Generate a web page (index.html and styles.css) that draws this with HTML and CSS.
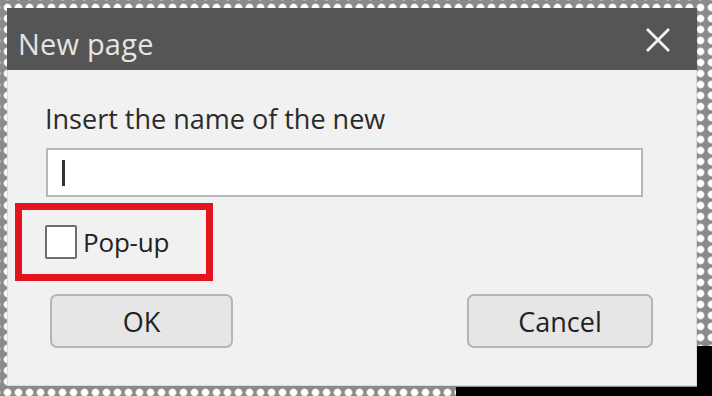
FILE: index.html
```html
<!DOCTYPE html>
<html>
<head>
<meta charset="utf-8">
<link rel="stylesheet" href="styles.css">
</head>
<body>
<div class="stage">
  <div class="dialog">
    <div class="titlebar">
      <span class="title">New page</span>
      <svg class="close" width="28" height="26" viewBox="0 0 28 26"><path d="M3 2 L25 24 M25 2 L3 24" stroke="#f2f2f2" stroke-width="2.8" fill="none"/></svg>
    </div>
    <div class="content">
      <div class="label">Insert the name of the new</div>
      <div class="input"><span class="caret"></span></div>
      <div class="highlight">
        <span class="check"></span>
        <span class="check-label">Pop-up</span>
      </div>
      <div class="buttons">
        <div class="btn btn-ok">OK</div>
        <div class="btn btn-cancel">Cancel</div>
      </div>
    </div>
  </div>
  <div class="shadow-right"></div>
  <div class="shadow-bottom"></div>
</div>
</body>
</html>
```
FILE: styles.css
```css
html, body {
  margin: 0;
  padding: 0;
}
body {
  width: 712px;
  height: 396px;
  overflow: hidden;
  background-color: #ffffff;
  background-image: radial-gradient(circle, #ffffff 0, #ffffff 3px, #8a8a8a 4.5px);
  background-size: 11px 11px;
  background-position: 2px 2px;
  font-family: "Open Sans", "Noto Sans", sans-serif;
}
.stage {
  position: relative;
  width: 712px;
  height: 396px;
  padding: 8px 0 0 7px;
  box-sizing: border-box;
}
.dialog {
  width: 690px;
  height: 378px;
  display: flex;
  flex-direction: column;
  background: #f0f0f0;
  position: relative;
  z-index: 1;
}
.titlebar {
  height: 62px;
  background: #555555;
  display: flex;
  align-items: center;
  justify-content: space-between;
  padding: 0 25px 0 11px;
  box-sizing: border-box;
  flex: none;
}
.title {
  color: #e4e4e4;
  font-size: 29px;
  line-height: 36px;
  letter-spacing: 0.2px;
  margin-top: 10px;
}
.close {
  display: block;
  margin-top: 2px;
}
.content {
  flex: 1;
  display: flex;
  flex-direction: column;
  border: 1px solid #d9d9d9;
  border-top: none;
  background: #f1f1f1;
}
.label {
  margin: 33px 0 0 37px;
  font-size: 27px;
  line-height: 32px;
  color: #2b2b2b;
}
.input {
  margin: 13px 0 0 38px;
  width: 597px;
  height: 49px;
  box-sizing: border-box;
  background: #ffffff;
  border: 2px solid #b7b7b7;
  display: flex;
  align-items: center;
  padding-left: 14px;
}
.caret {
  width: 3px;
  height: 26px;
  background: #333;
}
.highlight {
  margin: 6px 0 0 7px;
  width: 198px;
  height: 78px;
  box-sizing: border-box;
  border: 7px solid #e3141d;
  display: flex;
  align-items: center;
  padding-left: 23px;
  gap: 6px;
}
.check {
  width: 32px;
  height: 34px;
  box-sizing: border-box;
  border: 2px solid #6e6e6e;
  background: #ffffff;
  border-radius: 2px;
}
.check-label {
  font-size: 26px;
  line-height: 32px;
  color: #222;
  letter-spacing: -0.2px;
}
.buttons {
  display: flex;
  justify-content: space-between;
  margin: 13px 43px 0 42px;
}
.btn {
  height: 54px;
  box-sizing: border-box;
  border: 2px solid #b5b5b5;
  border-radius: 7px;
  background: #e6e6e6;
  display: flex;
  align-items: center;
  justify-content: center;
  font-size: 27px;
  color: #222;
}
.btn-ok {
  width: 183px;
}
.btn-cancel {
  width: 186px;
}
.shadow-right {
  position: absolute;
  left: 697px;
  top: 346px;
  width: 15px;
  height: 50px;
  background: #000;
}
.shadow-bottom {
  position: absolute;
  left: 456px;
  top: 387px;
  width: 256px;
  height: 9px;
  background: #000;
}
```
